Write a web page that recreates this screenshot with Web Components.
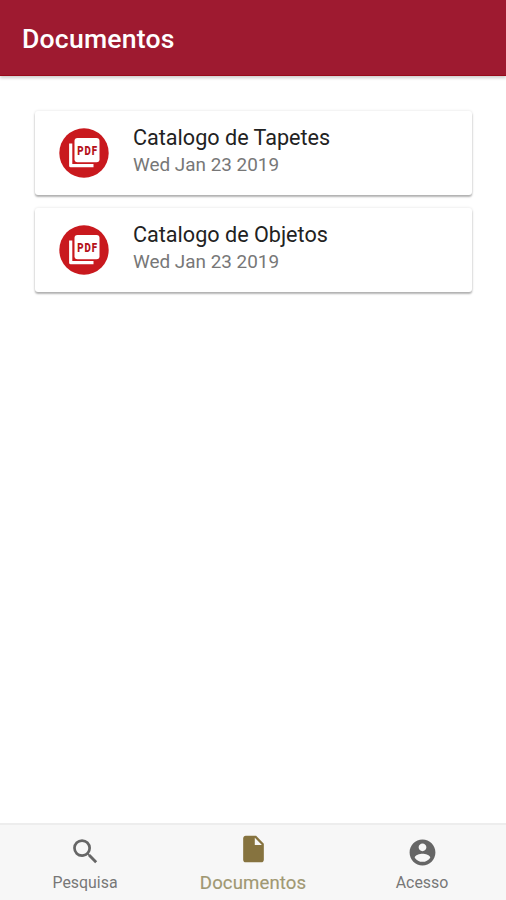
<!DOCTYPE html>
<html lang="pt">
<head>
  <meta charset="utf-8">
  <meta name="viewport" content="width=device-width, initial-scale=1">
  <title>Documentos</title>
  <style>
    body {
      margin: 0;
      font-family: Roboto, "Liberation Sans", sans-serif;
      background: #fff;
    }
  </style>
</head>
<body>
  <docs-app>
    <app-toolbar slot="header">Documentos</app-toolbar>
    <document-card date="Wed Jan 23 2019">Catalogo de Tapetes</document-card>
    <document-card date="Wed Jan 23 2019">Catalogo de Objetos</document-card>
    <tab-bar slot="footer">
      <tab-button icon="search">Pesquisa</tab-button>
      <tab-button icon="document" active>Documentos</tab-button>
      <tab-button icon="account">Acesso</tab-button>
    </tab-bar>
  </docs-app>

  <script>
    const ICONS = {
      search: `<svg width="33" height="33" viewBox="0 0 24 24"><path d="M15.5 14h-.79l-.28-.27A6.471 6.471 0 0 0 16 9.5 6.5 6.5 0 1 0 9.5 16c1.61 0 3.09-.59 4.23-1.57l.27.28v.79l5 4.99L20.49 19l-4.99-5zm-6 0C7.01 14 5 11.99 5 9.5S7.01 5 9.5 5 14 7.01 14 9.5 11.99 14 9.5 14z"/></svg>`,
      document: `<svg width="31" height="32" viewBox="0 0 24 24" preserveAspectRatio="none"><path d="M6 2c-1.1 0-1.99.9-1.99 2L4 20c0 1.1.89 2 1.99 2H18c1.1 0 2-.9 2-2V8l-6-6H6zm7 7V3.5L18.5 9H13z"/></svg>`,
      account: `<svg width="31" height="31" viewBox="0 0 24 24"><path d="M12 2C6.48 2 2 6.48 2 12s4.48 10 10 10 10-4.48 10-10S17.52 2 12 2zm0 3c1.66 0 3 1.34 3 3s-1.34 3-3 3-3-1.34-3-3 1.34-3 3-3zm0 14.2a7.2 7.2 0 0 1-6-3.22c.03-1.99 4-3.08 6-3.08s5.97 1.09 6 3.08a7.2 7.2 0 0 1-6 3.22z"/></svg>`
    };

    class DocsApp extends HTMLElement {
      connectedCallback() {
        this.attachShadow({ mode: "open" });
        this.shadowRoot.innerHTML = `
          <style>
            :host {
              display: flex;
              flex-direction: column;
              height: 100vh;
            }
            main {
              flex: 1;
              min-height: 0;
              display: flex;
              flex-direction: column;
              gap: 13px;
              padding: 35px 34px 0 35px;
            }
          </style>
          <slot name="header"></slot>
          <main><slot></slot></main>
          <slot name="footer"></slot>
        `;
      }
    }

    class AppToolbar extends HTMLElement {
      connectedCallback() {
        this.attachShadow({ mode: "open" });
        this.shadowRoot.innerHTML = `
          <style>
            :host {
              display: flex;
              align-items: center;
              box-sizing: border-box;
              height: 76px;
              padding: 2px 22px 0;
              background: #9e1a30;
              border-bottom: 1px solid #970a1a;
              box-shadow: 0 2px 3px rgba(0, 0, 0, 0.2);
              color: #fff;
              font-size: 26.6px;
              font-weight: 500;
              letter-spacing: 0.2px;
            }
          </style>
          <span><slot></slot></span>
        `;
      }
    }

    class DocumentCard extends HTMLElement {
      connectedCallback() {
        this.attachShadow({ mode: "open" });
        this.shadowRoot.innerHTML = `
          <style>
            :host {
              display: flex;
              align-items: center;
              box-sizing: border-box;
              height: 84px;
              padding: 0 24px;
              gap: 24px;
              background: #fff;
              border-radius: 3px;
              box-shadow: 0 2px 2px rgba(0, 0, 0, 0.28), 0 0 3px rgba(0, 0, 0, 0.12);
            }
            svg {
              flex: none;
            }
            div {
              padding-bottom: 4px;
            }
            h2, p {
              margin: 0;
              font-weight: 400;
              white-space: nowrap;
            }
            h2 {
              font-size: 21.6px;
              line-height: 28px;
              color: #222;
            }
            p {
              font-size: 18.9px;
              line-height: 26px;
              color: #777;
            }
          </style>
          <svg width="50" height="50" viewBox="0 0 50 50">
            <circle cx="25" cy="25" r="24.7" fill="#c9191e"/>
            <path d="M11.7 15.5V37.7H34.5" fill="none" stroke="#fff" stroke-width="3.2" stroke-linejoin="round"/>
            <rect x="15.5" y="10" width="25" height="24.2" rx="3" fill="#fff"/>
            <text transform="translate(18.3 26.5) scale(0.78 1)" font-size="12.5" font-weight="900" letter-spacing="1.2" fill="#b5121b">PDF</text>
          </svg>
          <div>
            <h2><slot></slot></h2>
            <p>${this.getAttribute("date")}</p>
          </div>
        `;
      }
    }

    class TabBar extends HTMLElement {
      connectedCallback() {
        this.attachShadow({ mode: "open" });
        this.shadowRoot.innerHTML = `
          <style>
            :host {
              display: flex;
              box-sizing: border-box;
              height: 77px;
              padding-left: 1px;
              background: #f7f7f7;
              border-top: 2px solid #ededed;
            }
          </style>
          <slot></slot>
        `;
      }
    }

    class TabButton extends HTMLElement {
      connectedCallback() {
        this.attachShadow({ mode: "open" });
        this.shadowRoot.innerHTML = `
          <style>
            :host {
              flex: 1;
              display: flex;
              flex-direction: column;
              align-items: center;
              justify-content: flex-end;
              box-sizing: border-box;
              padding-bottom: 7px;
              gap: 5px;
              color: #777;
              font-size: 15.9px;
              line-height: 20px;
            }
            :host(:last-child) {
              padding-left: 1px;
            }
            :host([active]) {
              gap: 8px;
              color: #a09872;
              font-size: 18.6px;
              letter-spacing: 0.1px;
              -webkit-text-stroke: 0.15px #a09872;
            }
            svg {
              display: block;
              fill: #666;
            }
            :host([active]) svg {
              fill: #86733f;
            }
          </style>
          ${ICONS[this.getAttribute("icon")]}
          <span><slot></slot></span>
        `;
      }
    }

    customElements.define("docs-app", DocsApp);
    customElements.define("app-toolbar", AppToolbar);
    customElements.define("document-card", DocumentCard);
    customElements.define("tab-bar", TabBar);
    customElements.define("tab-button", TabButton);
  </script>
</body>
</html>
